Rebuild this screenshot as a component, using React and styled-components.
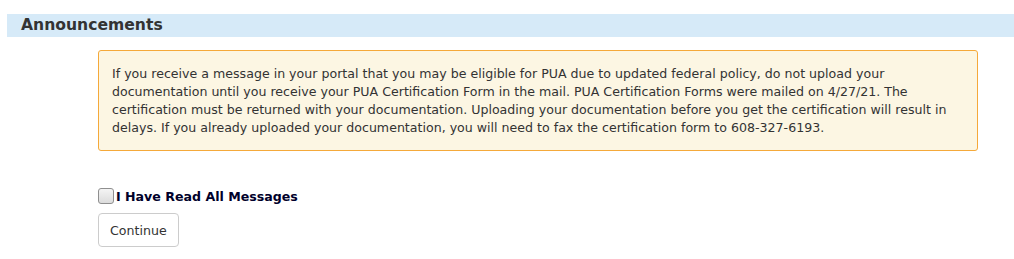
import styled, { createGlobalStyle } from "styled-components";

const GlobalStyle = createGlobalStyle`
  body {
    margin: 0;
    background: #fff;
    font-family: "DejaVu Sans", Verdana, sans-serif;
    color: #333;
  }
`

const Page = styled.div`
  padding: 14px 0 0 7px;
`

const SectionHeader = styled.h2`
  margin: 0;
  height: 23px;
  line-height: 23px;
  padding-left: 14px;
  background-color: #d6eaf8;
  font-size: 15.6px;
  font-weight: bold;
  color: #333;
`

const Content = styled.div`
  padding: 13px 36px 0 91px;
`

const Alert = styled.div`
  background-color: #fcf6e3;
  border: 1px solid #f5a93a;
  border-radius: 3px;
  padding: 14px 13px 13px;
  font-size: 12.6px;
  line-height: 18px;
  color: #333;
`

const ReadRow = styled.label`
  display: flex;
  align-items: center;
  margin-top: 37px;
  font-size: 12.6px;
  font-weight: bold;
  color: #00002a;
`

const Checkbox = styled.input`
  appearance: none;
  width: 16px;
  height: 16px;
  margin: 0 2px 0 0;
  border: 1px solid #8f8f8f;
  border-radius: 3px;
  background: linear-gradient(#f4f4f4, #dcdcdc);
`

const Button = styled.button`
  display: block;
  margin-top: 9px;
  height: 34px;
  padding: 0 11px;
  background: #fff;
  border: 1px solid #ccc;
  border-radius: 4px;
  font-family: "DejaVu Sans", Verdana, sans-serif;
  font-size: 12.6px;
  color: #333;
`

export default function App() {
  return (
    <>
      <GlobalStyle />
      <Page>
        <SectionHeader>Announcements</SectionHeader>
        <Content>
          <Alert>
            If you receive a message in your portal that you may be eligible for PUA due to updated federal policy, do not upload your documentation until you receive your PUA Certification Form in the mail. PUA Certification Forms were mailed on 4/27/21. The certification must be returned with your documentation. Uploading your documentation before you get the certification will result in delays. If you already uploaded your documentation, you will need to fax the certification form to 608-327-6193.
          </Alert>
          <ReadRow>
            <Checkbox type="checkbox" />
            I Have Read All Messages
          </ReadRow>
          <Button>Continue</Button>
        </Content>
      </Page>
    </>
  )
}
